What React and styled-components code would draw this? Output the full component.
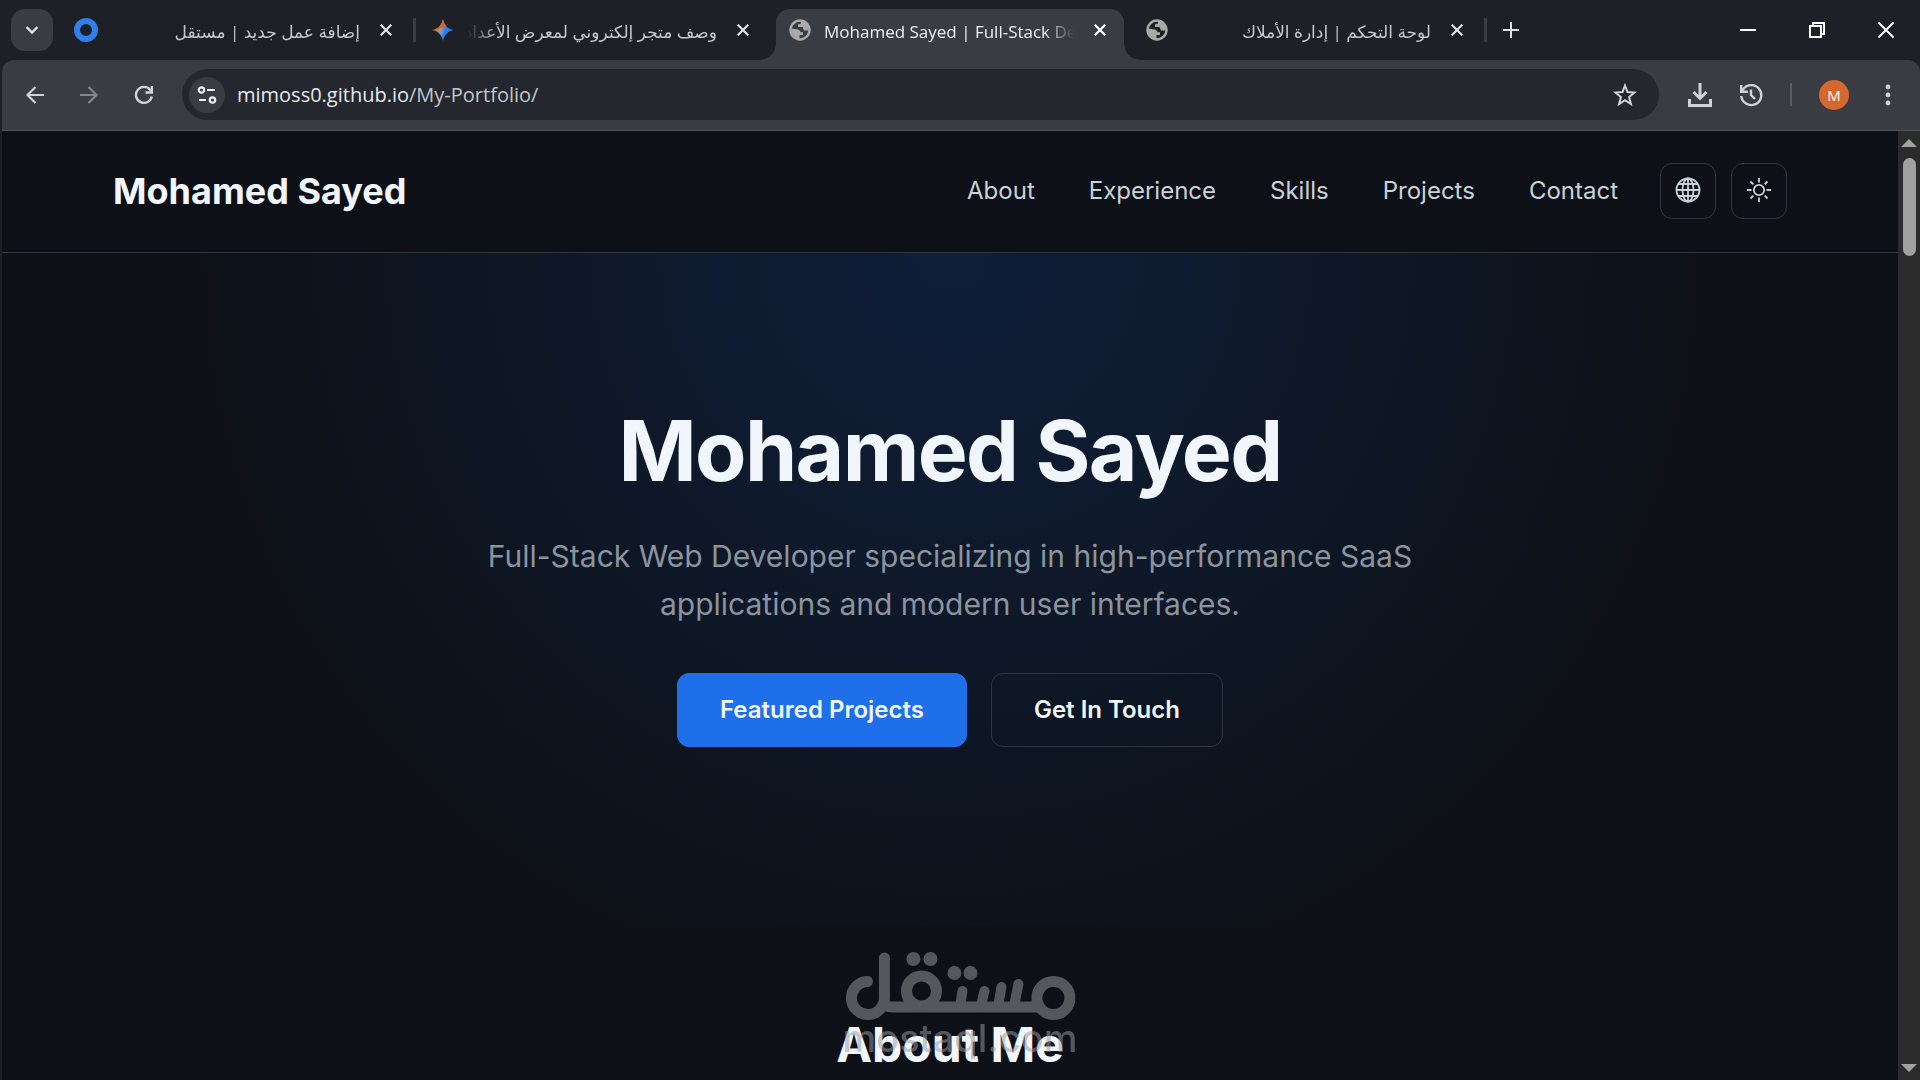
import React from "react";
import styled, { createGlobalStyle } from "styled-components";

const GlobalStyle = createGlobalStyle`
  * {
    box-sizing: border-box;
  }

  html,
  body,
  #root {
    height: 100%;
    margin: 0;
  }

  body {
    background: #0d1117;
    overflow: hidden;
  }

  button,
  input {
    font: inherit;
    color: inherit;
    margin: 0;
    padding: 0;
    border: 0;
    background: none;
  }

  a {
    color: inherit;
    text-decoration: none;
  }
`;

const tabs = [
  { title: "إضافة عمل جديد | مستقل", icon: "ring", rtl: true },
  {
    title: "وصف متجر إلكتروني لمعرض الأعداد",
    icon: "spark",
    rtl: true,
    divider: true,
  },
  { title: "Mohamed Sayed | Full-Stack Developer", icon: "globe", active: true },
  { title: "لوحة التحكم | إدارة الأملاك", icon: "globe", rtl: true },
];

const links = ["About", "Experience", "Skills", "Projects", "Contact"];

const RingIcon = () => (
  <svg width="24" height="24" viewBox="0 0 24 24" fill="none">
    <circle cx="12" cy="12" r="9" stroke="#2f80ed" strokeWidth="6" />
  </svg>
);

const SparkIcon = () => (
  <svg width="24" height="24" viewBox="0 0 24 24">
    <defs>
      <linearGradient id="spark" x1="0" y1="0.3" x2="1" y2="0.6">
        <stop offset="0.15" stopColor="#d9652b" />
        <stop offset="0.42" stopColor="#8fa3a8" />
        <stop offset="0.6" stopColor="#2f80ed" />
        <stop offset="1" stopColor="#1f6feb" />
      </linearGradient>
    </defs>
    <path
      d="M12 1C13 7 17 11 23 12C17 13 13 17 12 23C11 17 7 13 1 12C7 11 11 7 12 1Z"
      fill="url(#spark)"
    />
    <path d="M12 1C13 5 14 7 15 8.500L8 11L1 12C7 11 11 7 12 1Z" fill="#d9652b" />
  </svg>
);

const GlobeIcon = () => (
  <svg width="24" height="24" viewBox="-1 -1 24 24" fill="none">
    <circle cx="11" cy="11" r="9.500" stroke="#a9a9a9" strokeWidth="2.400" />
    <path
      d="M2 9.500L7.500 10.200Q11 10.500 11.500 13.200H14V16H10.500V20Q3 19 2 9.500ZM12 2V4.500L9 5.500V8H13.500L15 11.500H20.500Q20 3 12 2Z"
      fill="#a9a9a9"
    />
  </svg>
);

const icons = { ring: RingIcon, spark: SparkIcon, globe: GlobeIcon };

const CloseIcon = () => (
  <svg width="12" height="12" viewBox="0 0 12 12" stroke="currentColor" strokeWidth="2.200">
    <path d="M0.700 0.700L11.300 11.300M11.300 0.700L0.700 11.300" />
  </svg>
);

const Tab = ({ title, icon, rtl, active, divider }) => {
  const Icon = icons[icon];
  return (
    <TabItem $active={active}>
      {divider && <TabDivider />}
      <Icon />
      <TabTitle dir={rtl ? "rtl" : "ltr"} lang={rtl ? "ar" : "en"} $active={active}>
        {title}
      </TabTitle>
      <TabClose aria-label="Close tab" $active={active}>
        <CloseIcon />
      </TabClose>
    </TabItem>
  );
};

const TabStrip = () => (
  <Strip>
    <SearchTabs aria-label="Search tabs">
      <svg width="14" height="10" viewBox="0 0 14 10" fill="none" stroke="currentColor" strokeWidth="2.400">
        <path d="M1.500 2L7 7.500L12.500 2" />
      </svg>
    </SearchTabs>
    <TabList>
      {tabs.map((tab) => (
        <Tab key={tab.title} {...tab} />
      ))}
    </TabList>
    <NewTab aria-label="New tab">
      <svg width="16" height="16" viewBox="0 0 16 16" stroke="currentColor" strokeWidth="2">
        <path d="M8 0V16M0 8H16" />
      </svg>
    </NewTab>
    <WindowControls>
      <button aria-label="Minimize">
        <svg width="16" height="16" viewBox="0 0 16 16" stroke="currentColor" strokeWidth="2">
          <path d="M0 8H16" />
        </svg>
      </button>
      <button aria-label="Restore">
        <svg width="16" height="16" viewBox="0 0 16 16" fill="none" stroke="currentColor" strokeWidth="2">
          <path d="M1 4H12V15H1ZM4 4V1H15V12H12" />
        </svg>
      </button>
      <button aria-label="Close">
        <svg width="16" height="16" viewBox="0 0 16 16" stroke="currentColor" strokeWidth="2">
          <path d="M0.500 0.500L15.500 15.500M15.500 0.500L0.500 15.500" />
        </svg>
      </button>
    </WindowControls>
  </Strip>
);

const BrowserBar = () => (
  <Toolbar>
    <ToolButton aria-label="Back">
      <svg width="18" height="18" viewBox="0 0 18 18" fill="none" stroke="currentColor" strokeWidth="2.200">
        <path d="M18 9H1.500M9.500 1L1.500 9L9.500 17" />
      </svg>
    </ToolButton>
    <ToolButton aria-label="Forward" disabled $dim>
      <svg width="18" height="18" viewBox="0 0 18 18" fill="none" stroke="currentColor" strokeWidth="2.200">
        <path d="M0 9H16.500M8.500 1L16.500 9L8.500 17" />
      </svg>
    </ToolButton>
    <ToolButton aria-label="Reload">
      <svg width="20" height="20" viewBox="0 0 20 20" fill="none" stroke="currentColor" strokeWidth="2.400">
        <path d="M17.800 11.500A8 8 0 1 1 16 4.600L18 6.800" />
        <path d="M17.800 1V7.500H11.500" />
      </svg>
    </ToolButton>
    <Omnibox>
      <SiteInfo aria-label="View site information">
        <svg width="20" height="18" viewBox="0 0 20 18" fill="none" stroke="currentColor" strokeWidth="2.200">
          <circle cx="4.500" cy="4" r="2.700" />
          <path d="M10 4H18M2 14H9" />
          <circle cx="15.500" cy="14" r="2.700" />
        </svg>
      </SiteInfo>
      <Address>
        mimoss0.github.io<span>/My-Portfolio/</span>
      </Address>
      <Bookmark aria-label="Bookmark this tab">
        <svg width="24" height="24" viewBox="0 0 24 24" fill="none" stroke="currentColor" strokeWidth="2">
          <path d="M12 2.500L14.500 9L21.500 9.500L16.100 14L17.900 21L12 17.200L6.100 21L7.900 14L2.500 9.500L9.500 9Z" />
        </svg>
      </Bookmark>
    </Omnibox>
    <Actions>
      <ToolButton aria-label="Downloads">
        <svg width="24" height="24" viewBox="0 0 24 24" fill="none" stroke="currentColor" strokeWidth="3">
          <path d="M12 0V15M5.500 9L12 15.500L18.500 9M1.500 16V22.500H22.500V16" />
        </svg>
      </ToolButton>
      <ToolButton aria-label="History">
        <svg width="24" height="24" viewBox="0 0 24 24" fill="none" stroke="currentColor" strokeWidth="2.400">
          <path d="M2.300 13A10 10 0 1 0 4.500 5.800L2.500 8.500" />
          <path d="M2.200 2V8.800H9M12 6.500V12L16 16" />
        </svg>
      </ToolButton>
      <Separator />
      <Avatar aria-label="Profile">M</Avatar>
      <MenuButton aria-label="Menu">
        <svg width="6" height="22" viewBox="0 0 6 22" fill="currentColor">
          <circle cx="3" cy="3" r="2.400" />
          <circle cx="3" cy="11" r="2.400" />
          <circle cx="3" cy="19" r="2.400" />
        </svg>
      </MenuButton>
    </Actions>
  </Toolbar>
);

const Watermark = () => (
  <Mark aria-hidden="true">
    <svg width="230" height="68" viewBox="0 0 230 68" fill="none" stroke="currentColor" strokeWidth="11" strokeLinecap="round">
      <path d="M22 29.500A16.500 16.500 0 1 0 39 46V6M39 50Q40 55 46 55H192" />
      <circle cx="76" cy="39" r="15" />
      <circle cx="208" cy="46" r="16.500" />
      <path d="M115 52L117 39M136 52L139 39M153 52L156 35M169 52L173 32" strokeWidth="10" />
      <g fill="currentColor" stroke="none">
        <circle cx="68" cy="7" r="7" />
        <circle cx="85" cy="7" r="7" />
        <circle cx="109" cy="21" r="7" />
        <circle cx="125" cy="21" r="7" />
      </g>
    </svg>
    <span>mostaql.com</span>
  </Mark>
);

const App = () => {
  return (
    <Window>
      <GlobalStyle />
      <TabStrip />
      <BrowserBar />
      <Viewport>
        <Page>
          <Header>
            <Brand href="#top">Mohamed Sayed</Brand>
            <Nav>
              {links.map((link) => (
                <a key={link} href={`#${link.toLowerCase()}`}>
                  {link}
                </a>
              ))}
            </Nav>
            <IconButtons>
              <IconButton aria-label="Change language">
                <svg width="26" height="26" viewBox="0 0 26 26" fill="none" stroke="currentColor" strokeWidth="1.800">
                  <circle cx="13" cy="13" r="11.500" />
                  <ellipse cx="13" cy="13" rx="5.500" ry="11.500" />
                  <path d="M13 1.500V24.500M1.500 13H24.500M3.500 7H22.500M3.500 19H22.500" />
                </svg>
              </IconButton>
              <IconButton aria-label="Toggle theme">
                <svg width="26" height="26" viewBox="0 0 26 26" fill="none" stroke="currentColor" strokeWidth="1.800">
                  <circle cx="13" cy="13" r="5.200" />
                  <path d="M13 1V5.500M13 20.500V25M1 13H5.500M20.500 13H25M4.500 4.500L7.300 7.300M18.700 18.700L21.500 21.500M21.500 4.500L18.700 7.300M7.300 18.700L4.500 21.500" />
                </svg>
              </IconButton>
            </IconButtons>
          </Header>
          <Hero>
            <h1>Mohamed Sayed</h1>
            <p>
              Full-Stack Web Developer specializing in high-performance SaaS
              applications and modern user interfaces.
            </p>
            <HeroActions>
              <HeroLink href="#projects" $primary>
                Featured Projects
              </HeroLink>
              <HeroLink href="#contact">Get In Touch</HeroLink>
            </HeroActions>
          </Hero>
          <AboutSection id="about">
            <h2>About Me</h2>
          </AboutSection>
        </Page>
        <ScrollTrack>
          <svg width="16" height="8" viewBox="0 0 16 8" fill="#a0a0a0">
            <path d="M8 0L16 8H0Z" />
          </svg>
          <ScrollThumb />
          <svg width="16" height="8" viewBox="0 0 16 8" fill="#a0a0a0">
            <path d="M8 8L16 0H0Z" />
          </svg>
        </ScrollTrack>
      </Viewport>
      <Watermark />
    </Window>
  );
};

const Window = styled.div`
  position: relative;
  display: flex;
  flex-direction: column;
  height: 100vh;
  overflow: hidden;
  background: #1d2027;
  font-family: "Open Sans", "DejaVu Sans", sans-serif;
`;

const Strip = styled.div`
  display: flex;
  align-items: center;
  flex: none;
  height: 60px;
  padding-left: 11px;
  color: #dfe1e6;
`;

const SearchTabs = styled.button`
  display: flex;
  align-items: center;
  justify-content: center;
  width: 42px;
  height: 42px;
  margin-right: 9px;
  border-radius: 14px;
  background: #3a3c44;
`;

const TabList = styled.div`
  display: flex;
  align-self: flex-end;
  gap: 9px;
  height: 51px;
`;

const TabItem = styled.div`
  position: relative;
  display: flex;
  align-items: center;
  width: 348px;
  padding: 0 18px 9px 12px;
  gap: 12px;
  border-radius: 14px 14px 0 0;
  background: ${({ $active }) => ($active ? "#3a3c44" : "transparent")};

  svg {
    flex: none;
  }

  /* flared feet of the selected tab */
  &::before,
  &::after {
    content: "";
    display: ${({ $active }) => ($active ? "block" : "none")};
    position: absolute;
    bottom: 0;
    width: 15px;
    height: 15px;
  }

  &::before {
    right: 100%;
    background: radial-gradient(circle at 0 0, transparent 14px, #3a3c44 15px);
  }

  &::after {
    left: 100%;
    background: radial-gradient(circle at 100% 0, transparent 14px, #3a3c44 15px);
  }
`;

const TabDivider = styled.span`
  position: absolute;
  left: -6px;
  top: 9px;
  width: 3px;
  height: 24px;
  background: #3a3c44;
`;

const TabTitle = styled.span`
  flex: 1;
  min-width: 0;
  padding-top: 3px;
  overflow: hidden;
  white-space: nowrap;
  font-size: 17px;
  line-height: 24px;
  color: ${({ $active }) => ($active ? "#eef0f4" : "#c6c8cd")};
  mask-image: linear-gradient(
    ${({ dir }) => (dir === "rtl" ? "to left" : "to right")},
    #000 88%,
    transparent
  );
`;

const TabClose = styled.button`
  display: flex;
  padding: 0 0 0 8px;
  color: ${({ $active }) => ($active ? "#ffffff" : "#dfe1e6")};
`;

const NewTab = styled.button`
  display: flex;
  align-items: center;
  height: 24px;
  margin-left: 3px;
  padding-left: 16px;
  border-left: 3px solid #3a3c44;
`;

const WindowControls = styled.div`
  display: flex;
  gap: 53px;
  margin-left: auto;
  padding-right: 26px;
  color: #ffffff;

  button {
    display: flex;
  }
`;

const Toolbar = styled.div`
  display: flex;
  align-items: center;
  flex: none;
  height: 71px;
  margin-left: 2px;
  padding: 0 29px 1px 24px;
  gap: 36px;
  border-radius: 12px 12px 0 0;
  border-bottom: 1px solid #50525a;
  background: #3a3c44;
`;

const ToolButton = styled.button`
  display: flex;
  color: ${({ $dim }) => ($dim ? "#84868d" : "#d0d2d8")};
`;

const MenuButton = styled(ToolButton)`
  margin-left: 9px;
`;

const Omnibox = styled.div`
  display: flex;
  align-items: center;
  flex: 1;
  height: 51px;
  margin: 0 -7px 0 -8px;
  padding: 0 22px 0 7px;
  border-radius: 26px;
  background: #24272e;
`;

const SiteInfo = styled.button`
  display: flex;
  align-items: center;
  justify-content: center;
  width: 36px;
  height: 36px;
  border-radius: 50%;
  background: #3a3c44;
  color: #eef0f4;
`;

const Address = styled.span`
  flex: 1;
  padding-left: 12px;
  font-size: 20px;
  color: #e6e8ee;

  span {
    color: #c2c5cc;
  }
`;

const Bookmark = styled.button`
  display: flex;
  color: #d0d2d8;
`;

const Actions = styled.div`
  display: flex;
  align-items: center;
  gap: 27px;
`;

const Separator = styled.span`
  width: 2px;
  height: 23px;
  background: #5a5c64;
`;

const Avatar = styled.button`
  width: 30px;
  height: 30px;
  border-radius: 50%;
  background: #d4692d;
  color: #ffffff;
  font-size: 15px;
  line-height: 30px;
`;

const Viewport = styled.div`
  display: flex;
  flex: 1;
  min-height: 0;
  padding-left: 2px;
`;

const Page = styled.main`
  flex: 1;
  overflow: hidden;
  background: #0d1117;
  color: #f0f6fc;
  font-family: Inter, "Liberation Sans", sans-serif;
`;

const Header = styled.header`
  display: flex;
  align-items: center;
  height: 122px;
  padding: 0 111px 2px;
  border-bottom: 1px solid #30363d;
`;

const Brand = styled.a`
  margin-right: auto;
  font-size: 36px;
  font-weight: 700;
`;

const Nav = styled.nav`
  display: flex;
  gap: 54px;
  font-size: 24px;
  color: #c9d1d9;
`;

const IconButtons = styled.div`
  display: flex;
  gap: 15px;
  margin-left: 42px;
`;

const IconButton = styled.button`
  display: flex;
  align-items: center;
  justify-content: center;
  width: 56px;
  height: 56px;
  padding-bottom: 2px;
  border: 1px solid #30363d;
  border-radius: 12px;
  color: #c9d1d9;
`;

const Hero = styled.section`
  display: flex;
  flex-direction: column;
  align-items: center;
  padding: 144px 48px 180px;
  text-align: center;
  background: radial-gradient(circle at 50% 0, #0f1f3a 0%, #0d1117 65%);

  h1 {
    margin: 0;
    font-size: 84px;
    font-weight: 700;
    line-height: 108px;
    letter-spacing: -0.02em;
  }

  p {
    max-width: 960px;
    margin: 27px 0 0;
    font-size: 30px;
    line-height: 48px;
    color: #8b949e;
  }
`;

const HeroActions = styled.div`
  display: flex;
  gap: 24px;
  margin-top: 45px;
`;

const HeroLink = styled.a`
  padding: 18px 42px;
  border: 1px solid ${({ $primary }) => ($primary ? "#1f6feb" : "#30363d")};
  border-radius: 12px;
  background: ${({ $primary }) => ($primary ? "#1f6feb" : "transparent")};
  font-size: 24px;
  font-weight: 600;
  line-height: 36px;
`;

const AboutSection = styled.section`
  padding: 82px 48px;
  text-align: center;

  h2 {
    margin: 0;
    font-size: 48px;
    font-weight: 700;
    line-height: 72px;
  }
`;

const ScrollTrack = styled.div`
  display: flex;
  flex-direction: column;
  align-items: center;
  width: 22px;
  padding: 8px 0;
  background: #2c2b2b;

  svg:last-child {
    margin-top: auto;
  }
`;

const ScrollThumb = styled.div`
  width: 13px;
  height: 98px;
  margin-top: 11px;
  border-radius: 7px;
  background: #a0a0a0;
`;

const Mark = styled.div`
  position: absolute;
  left: 50%;
  bottom: 24px;
  display: flex;
  flex-direction: column;
  align-items: center;
  transform: translateX(-50%);
  color: #9a9ca0;
  opacity: 0.5;

  span {
    font-family: Inter, sans-serif;
    font-size: 38px;
    font-weight: 500;
    line-height: 36px;
  }
`;

export default App;
